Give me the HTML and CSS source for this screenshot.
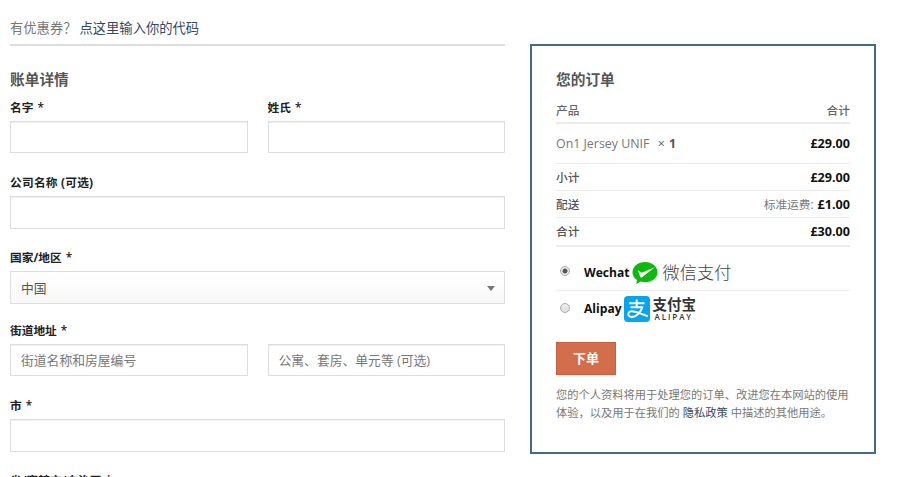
FILE: index.html
```html
<!DOCTYPE html>
<html lang="zh-CN">
<head>
<meta charset="utf-8">
<title>结账</title>
<link rel="stylesheet" href="styles.css">
</head>
<body>
<main class="checkout">
  <section class="billing">
    <p class="coupon">有优惠券？<a class="coupon-link">点这里输入你的代码</a></p>
    <h3 class="title">账单详情</h3>
    <div class="row">
      <div class="field"><label class="label">名字 <span class="required">*</span></label><div class="input"></div></div>
      <div class="field"><label class="label">姓氏 <span class="required">*</span></label><div class="input"></div></div>
    </div>
    <div class="field company"><label class="label optional">公司名称 (可选)</label><div class="input tall"></div></div>
    <div class="field country"><label class="label">国家/地区 <span class="required">*</span></label><div class="input tall select"><span>中国</span><i class="caret"></i></div></div>
    <div class="field street"><label class="label">街道地址 <span class="required">*</span></label>
      <div class="row"><div class="input">街道名称和房屋编号</div><div class="input">公寓、套房、单元等 (可选)</div></div>
    </div>
    <div class="field city"><label class="label">市 <span class="required">*</span></label><div class="input tall"></div></div>
    <div class="field state"><label class="label">省/直辖市/自治区 <span class="required">*</span></label></div>
  </section>
  <aside class="order">
    <h3 class="title">您的订单</h3>
    <div class="line head"><span>产品</span><span>合计</span></div>
    <div class="line product"><span>On1 Jersey UNIF <span class="qty">× <b>1</b></span></span><b class="price">£29.00</b></div>
    <div class="line sum"><span class="name">小计</span><b class="price">£29.00</b></div>
    <div class="line sum"><span class="name">配送</span><span class="shipping">标准运费: <b class="price">£1.00</b></span></div>
    <div class="line sum total"><span class="name">合计</span><b class="price">£30.00</b></div>
    <div class="pay wechat">
      <i class="radio checked"></i><b class="method">Wechat</b>
      <svg class="wechat-icon" viewBox="0 0 26 24"><path d="M13 1C6 1 .5 5.500 .5 11.200c0 3.200 1.700 6 4.500 7.800L4.300 23l4.500-2.400c1.300.4 2.700.6 4.200.6 7 0 12.500-4.500 12.500-10S20 1 13 1z" fill="#0db90f"/><path d="M6 9.300l3.700 2.500L22.800 6.300 10 16.200c-.9.6-1.500.3-1.900-.6z" fill="#fff"/></svg>
      <span class="wechat-name">微信支付</span>
    </div>
    <div class="pay alipay">
      <i class="radio"></i><b class="method">Alipay</b>
      <svg class="alipay-icon" viewBox="0 0 26 26"><rect width="26" height="26" rx="4" fill="#08a5ec"/><path d="M5 7.300h15.500M12.700 3.500v7.800M6.500 11.300h11.800c-1 3.300-3.200 6.200-5.700 8-2.300 1.600-4.800 2-6.600 1.300-2.400-.9-2.500-4.300.5-5.200 3.700-1.100 8.500 1.600 17.500 4.900" fill="none" stroke="#fff" stroke-width="1.900"/></svg>
      <span class="alipay-brand"><span class="alipay-cn">支付宝</span><span class="alipay-en">ALIPAY</span></span>
    </div>
    <button class="submit" type="button">下单</button>
    <p class="privacy">您的个人资料将用于处理您的订单、改进您在本网站的使用<br>体验，以及用于在我们的 <a class="policy">隐私政策</a> 中描述的其他用途。</p>
  </aside>
</main>
</body>
</html>
```

FILE: styles.css
```css
* { box-sizing: border-box; }
body {
  margin: 0;
  height: 477px;
  overflow: hidden;
  background: #fff;
  color: #777;
  font: 12.8px/18px "Open Sans", "Noto Sans CJK SC", sans-serif;
}
p, h3 { margin: 0; }
.checkout { display: flex; align-items: flex-start; gap: 25px; padding-left: 10px; }
.billing { width: 495px; }
.coupon {
  height: 46px;
  padding-top: 19px;
  border-bottom: 2px solid #ddd;
  font-size: 13.3px;
  white-space: nowrap;
}
.coupon-link { margin-left: 3px; color: #334862; }
.title { color: #555; font-size: 14.7px; line-height: 20px; font-weight: 700; }
.billing .title { margin-top: 23px; }
.row { display: grid; grid-template-columns: 237.5px 237.5px; gap: 20px; }
.billing > .row { margin-top: 9px; }
.label {
  display: block;
  height: 23px;
  color: #222;
  font-size: 11.7px;
  line-height: 18px;
  font-weight: 700;
}
.optional { letter-spacing: .25px; }
.required { margin-left: 1px; font-weight: 600; }
.input {
  height: 32px;
  padding: 0 10px;
  border: 1px solid #ddd;
  box-shadow: inset 0 1px 1px rgba(0, 0, 0, .07);
  line-height: 30px;
  white-space: nowrap;
}
.tall { height: 33px; }
.company, .city { margin-top: 20px; }
.country, .state { margin-top: 19px; }
.street { margin-top: 17px; }
.select {
  display: flex;
  align-items: center;
  justify-content: space-between;
  padding-right: 9px;
  color: #555;
  background: linear-gradient(#fff, #f8f8f8);
  box-shadow: none;
}
.caret { margin-top: 1px; border: 4px solid transparent; border-top: 5px solid #777; border-bottom: 0; }
.order {
  width: 346px;
  height: 410px;
  margin-top: 44px;
  padding: 23px 24px 0 24px;
  border: 2px solid #456890;
}
.line {
  display: flex;
  justify-content: space-between;
  align-items: center;
  border-bottom: 1px solid #ececec;
  font-size: 11.7px;
}
.head { height: 35px; padding-top: 8px; border-bottom-width: 2px; font-weight: 500; color: #666; }
.product { height: 40px; font-size: 12.4px; }
.qty { margin-left: 5px; color: #555; word-spacing: 1px; }
.price { color: #111; font-size: 12.6px; }
.sum { height: 27px; padding-top: 1px; }
.name { margin-top: -2px; color: #555; font-weight: 500; }
.shipping { word-spacing: 1px; }
.total { height: 29px; padding-top: 0; border-bottom-width: 2px; }
.pay { display: flex; align-items: center; }
.wechat { height: 44px; padding-top: 8px; border-bottom: 1px solid #ececec; }
.alipay { height: 36px; }
.radio {
  width: 10px;
  height: 10px;
  margin: -3px 14px 0 4px;
  border: 1px solid #aaa;
  border-radius: 50%;
  background: linear-gradient(#eee, #ddd);
}
.checked { background: radial-gradient(circle, #555 0 2px, #eee 3px); }
.method { color: #111; font-size: 12.1px; }
.wechat-icon { width: 26px; height: 24px; margin-left: 2px; }
.wechat-name { margin-left: 5px; font-size: 17.2px; font-weight: 300; color: #444; }
.alipay-icon { width: 26px; height: 26px; margin-left: 2px; }
.alipay-brand { display: flex; flex-direction: column; margin-left: 3px; color: #333; }
.alipay-cn { font-size: 14.5px; line-height: 16px; font-weight: 700; }
.alipay-en { padding-left: 2px; font-size: 8px; line-height: 8px; font-weight: 600; letter-spacing: 1.9px; }
.submit {
  display: block;
  width: 60px;
  height: 33px;
  margin-top: 15px;
  padding: 0 0 1px;
  border: 1px solid #c8603c;
  background: #d26e4b;
  color: #fff;
  font: 700 13px/28px "Open Sans", "Noto Sans CJK SC", sans-serif;
}
.privacy { margin-top: 11px; font-size: 11.25px; line-height: 17.500px; white-space: nowrap; }
.policy { color: #334862; }
```
